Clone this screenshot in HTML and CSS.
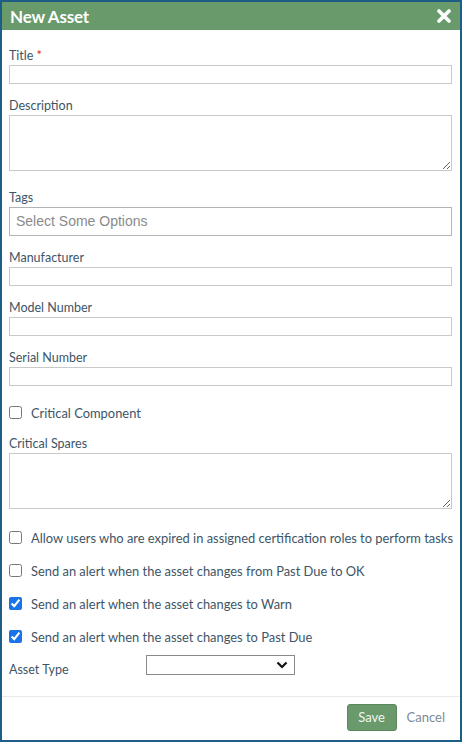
FILE: index.html
```html
<!DOCTYPE html>
<html lang="en">
<head>
    <meta charset="UTF-8">
    <meta name="viewport" content="width=device-width, initial-scale=1.0">
    <title>New Asset</title>
    <link rel="stylesheet" href="styles.css">
</head>
<body>
    <div class="dialog">
        <div class="dialogHeader">
            <span class="dialogTitle">New Asset</span>
            <svg class="closeIcon" width="14" height="14" viewBox="0 0 14 14">
                <path d="M2 2 L12 12 M12 2 L2 12" stroke="#fff" stroke-width="3.6" stroke-linecap="round"/>
            </svg>
        </div>
        <div class="dialogBody">
            <div class="field">
                <label class="label">Title <span class="req">*</span></label>
                <input class="input" type="text">
            </div>
            <div class="field desc">
                <label class="label">Description</label>
                <textarea class="textarea"></textarea>
            </div>
            <div class="field">
                <label class="label">Tags</label>
                <div class="tags">Select Some Options</div>
            </div>
            <div class="field">
                <label class="label">Manufacturer</label>
                <input class="input" type="text">
            </div>
            <div class="field">
                <label class="label">Model Number</label>
                <input class="input" type="text">
            </div>
            <div class="field">
                <label class="label">Serial Number</label>
                <input class="input" type="text">
            </div>
            <label class="check first">
                <input type="checkbox"> Critical Component
            </label>
            <div class="field spares">
                <label class="label">Critical Spares</label>
                <textarea class="textarea"></textarea>
            </div>
            <label class="check">
                <input type="checkbox"> Allow users who are expired in assigned certification roles to perform tasks
            </label>
            <label class="check">
                <input type="checkbox"> Send an alert when the asset changes from Past Due to OK
            </label>
            <label class="check">
                <input type="checkbox" checked> Send an alert when the asset changes to Warn
            </label>
            <label class="check">
                <input type="checkbox" checked> Send an alert when the asset changes to Past Due
            </label>
            <div class="typeRow">
                <label class="label typeLabel">Asset Type</label>
                <div class="select">
                    <svg width="12" height="8" viewBox="0 0 12 8">
                        <path d="M1.5 1.5 L6 6 L10.5 1.5" fill="none" stroke="#111" stroke-width="2.2"/>
                    </svg>
                </div>
            </div>
        </div>
        <div class="dialogFooter">
            <button class="save">Save</button>
            <span class="cancel">Cancel</span>
        </div>
    </div>
</body>
</html>
```

FILE: styles.css
```css
*{margin:0;padding:0;box-sizing:border-box;}
html,body{
    height:100%;
    overflow:hidden;
    background:#fff;
}
body{
    font-family:Lato,"Noto Sans",sans-serif;
    color:#3e5566;
}
.dialog{
    width:462px;
    height:742px;
    border:2px solid #1d5d86;
    display:flex;
    flex-direction:column;
}
.dialogHeader{
    height:28px;
    background:#699a6c;
    display:flex;
    align-items:center;
    justify-content:space-between;
    padding:0 8px 0 8px;
}
.dialogTitle{
    color:#fff;
    font-size:17px;
    font-weight:bold;
    letter-spacing:-0.2px;
}
.closeIcon{
    margin-right:1px;
}
.dialogBody{
    padding:18px 8px 0 7px;
    flex:1;
}
.field{
    margin-bottom:14px;
}
.field.desc{
    margin-bottom:19px;
}
.label{
    display:block;
    font-size:12.5px;
    line-height:15px;
    margin-bottom:2px;
    color:#3e5566;
}
.req{
    color:#e02020;
}
.input{
    display:block;
    width:100%;
    height:19px;
    border:1px solid #c9c9c9;
    background:#fff;
}
.textarea{
    display:block;
    width:100%;
    height:56px;
    border:1px solid #c9c9c9;
    resize:vertical;
    background:#fff;
}
.tags{
    height:29px;
    border:1px solid #b3b3b3;
    font-family:"Liberation Sans",Arial,sans-serif;
    font-size:14px;
    color:#8a8a8a;
    line-height:27px;
    padding-left:6px;
}
.check{
    display:flex;
    align-items:center;
    font-size:12.9px;
    color:#3e5566;
    height:15px;
    margin-bottom:18px;
    white-space:nowrap;
}
.check input{
    width:13px;
    height:13px;
    margin:0 9px 0 0;
    flex:none;
    accent-color:#1a73e8;
}
.check.first{
    margin-top:19px;
    margin-bottom:16px;
}
.spares{
    margin-bottom:21px;
}
.typeRow{
    display:flex;
    align-items:flex-start;
    margin-top:-7px;
}
.typeLabel{
    width:137px;
    margin-top:7px;
}
.select{
    width:149px;
    height:20px;
    border:1px solid #8a8a8a;
    display:flex;
    align-items:center;
    justify-content:flex-end;
    padding-right:6px;
}
.dialogFooter{
    height:44px;
    border-top:1px solid #eaeaea;
    display:flex;
    align-items:center;
    justify-content:flex-end;
    padding:0 15px 3px 0;
}
.save{
    width:50px;
    height:27px;
    background:#6a9a6c;
    border:1px solid #5a885c;
    border-radius:3px;
    color:#f0f5f0;
    font-family:Lato,"Noto Sans",sans-serif;
    font-size:13px;
}
.cancel{
    margin-left:10px;
    font-size:13px;
    color:#7c8c96;
}
```
